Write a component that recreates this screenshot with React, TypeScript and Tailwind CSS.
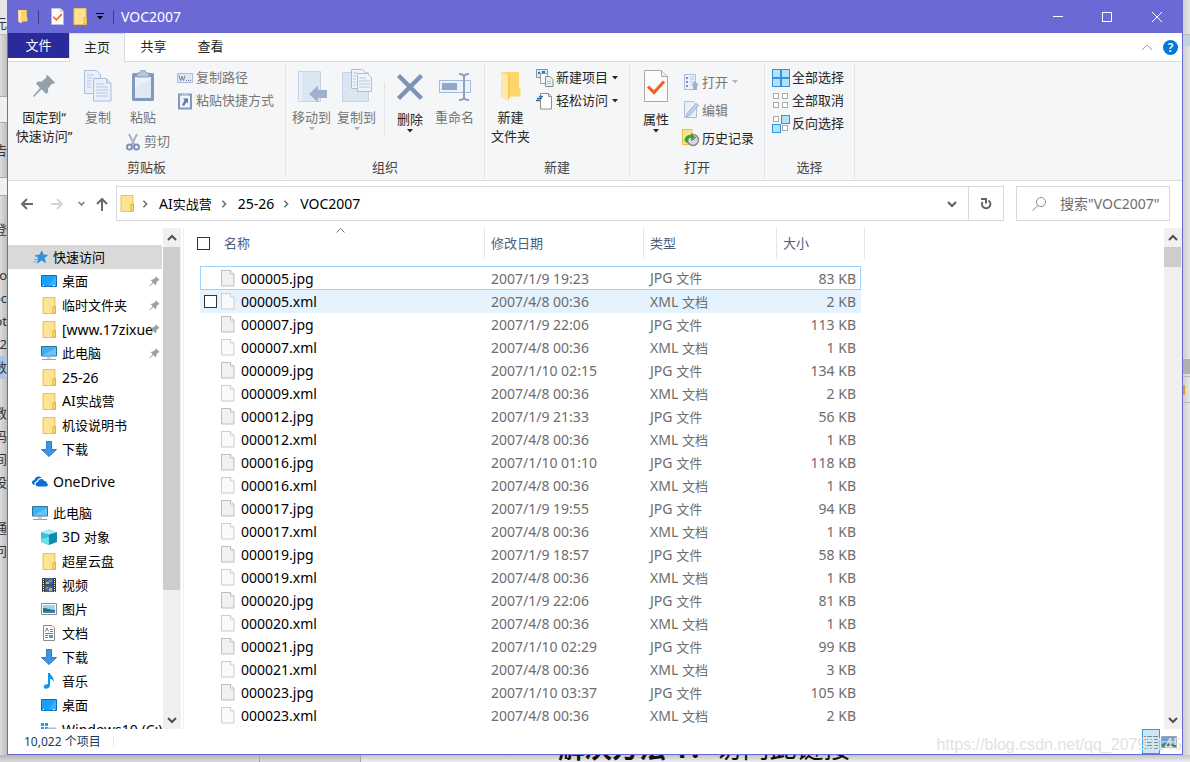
import type { ReactNode } from "react";

const UI_FONT = "font-['Noto_Sans','Noto_Sans_CJK_SC',sans-serif]";

type FileRow = { name: string; date: string; type: string; size: string };

const dates = [
  "2007/1/9 19:23",
  "2007/1/9 22:06",
  "2007/1/10 02:15",
  "2007/1/9 21:33",
  "2007/1/10 01:10",
  "2007/1/9 19:55",
  "2007/1/9 18:57",
  "2007/1/9 22:06",
  "2007/1/10 02:29",
  "2007/1/10 03:37",
];
const ids = ["05", "07", "09", "12", "16", "17", "19", "20", "21", "23"];
const jpgSizes = [83, 113, 134, 56, 118, 94, 58, 81, 99, 105];
const xmlSizes = [2, 1, 2, 1, 1, 1, 1, 1, 3, 2];

const files: FileRow[] = ids.flatMap((id, i) => [
  { name: `0000${id}.jpg`, date: dates[i], type: "JPG 文件", size: `${jpgSizes[i]} KB` },
  { name: `0000${id}.xml`, date: "2007/4/8 00:36", type: "XML 文档", size: `${xmlSizes[i]} KB` },
]);

// Chinese runs are set one pixel smaller than Latin ones
function Txt({ children }: { children: string }) {
  return (
    <span className="text-[14px] whitespace-nowrap">
      {children.split(/([\u4e00-\u9fff]+)/).map((part, i) =>
        i % 2 ? (
          <span key={i} className="text-[13px]">
            {part}
          </span>
        ) : (
          part
        ),
      )}
    </span>
  );
}

/* ---------- icons ---------- */

function FolderIcon({ className = "w-4 h-[17px]" }: { className?: string }) {
  return (
    <svg viewBox="0 0 16 17" className={className} aria-hidden="true">
      <path d="M2 .5h12v8.500h.5v7.500H2z" fill="#ffe394" stroke="#e8c353" />
      <path d="M12 9.500h2.500v6.500H12z" fill="#ffd96f" stroke="#e0b43c" />
    </svg>
  );
}

function OpenFolderIcon({ className }: { className: string }) {
  return (
    <svg viewBox="0 0 22 32" className={className} aria-hidden="true">
      <path d="M1 2h18v15l1.500 1v8.500H1z" fill="#fbd66d" />
      <path d="M1 2l7 3.500V31l-6.500-4z" fill="#ffe9a8" />
      <path d="M8 5.500V31l2-4.500V6z" fill="#f5c956" />
    </svg>
  );
}

function DocCheckIcon({ className }: { className: string }) {
  return (
    <svg viewBox="0 0 24 32" className={className} aria-hidden="true">
      <path d="M.5.5h17l6 6v25H.5z" fill="#fbfbfb" stroke="#a9a9a9" />
      <path d="M17.500.5v6h6" fill="#e9e9e9" stroke="#a9a9a9" />
      <path d="M4 16.500l6 6L20 11.500" fill="none" stroke="#f0601f" strokeWidth="3" />
    </svg>
  );
}

function PinIcon({ className }: { className: string }) {
  return (
    <svg viewBox="0 0 24 24" className={className} aria-hidden="true">
      <path
        d="M15.500 1L23 8.500l-1.500 1.500-1.500-.5-4 5 .2 3.500-2 2-4.700-4.800L2 23l-1-1 7-8L4 9.500l2-2 3.500.3 5-4.300-.5-1.200z"
        fill="#93a0a9"
      />
    </svg>
  );
}

function CopyIcon() {
  return (
    <svg viewBox="0 0 28 32" className="w-7 h-8" aria-hidden="true">
      <g fill="#e9f0f9" stroke="#adc0d9">
        <path d="M.5.5h12l4 4v19H.5z" />
        <path d="M9.500 8.500h13l4.500 4.500v18H9.500z" />
        <path d="M22.500 8.500V13H27" fill="#d3dfee" />
      </g>
      <path d="M3 5h7M3 8h5M3 11h4M3 14h4M3 17h4M12 14h8M12 17h12M12 20h12M12 23h12M12 26h12" stroke="#b4c8e2" />
    </svg>
  );
}

function PasteIcon() {
  return (
    <svg viewBox="0 0 24 32" className="w-6 h-8" aria-hidden="true">
      <rect x="1" y="3" width="22" height="28" rx="1.500" fill="#8299be" />
      <path d="M4 7h16v21H4z" fill="#eaf1fa" />
      <path d="M4 18l16-9v19H4z" fill="#dfe9f5" />
      <path d="M6 3h3a3 3 0 016 0h3v4H6z" fill="#b8c6dc" stroke="#8d9fbe" />
    </svg>
  );
}

function PathIcon() {
  return (
    <svg viewBox="0 0 16 16" className="w-4 h-4" aria-hidden="true">
      <path d="M.5 3.500h15v9H.5z" fill="#dde8f5" stroke="#a9bcd8" />
      <path d="M2 5.500l1.500 5 1.500-4 1.500 4 1.500-5M9 10.500h1M11 10.500h1M13 10.500h1" fill="none" stroke="#6f8099" />
    </svg>
  );
}

function ShortcutIcon() {
  return (
    <svg viewBox="0 0 16 18" className="w-4 h-[18px]" aria-hidden="true">
      <path d="M2 2.500h12v14H2z" fill="#edf3fa" stroke="#8499bb" strokeWidth="2" />
      <path d="M5 1h6v3H5z" fill="#b8c6dc" />
      <path d="M6 6.500h5v5L9.500 10 7 14l-2-1 2.500-4.500z" fill="#607ba8" />
    </svg>
  );
}

function ScissorsIcon() {
  return (
    <svg viewBox="0 0 14 18" className="w-[14px] h-[18px]" aria-hidden="true">
      <path d="M3 1l5.500 11M11 1L5.500 12" stroke="#a4b4cc" strokeWidth="2" />
      <circle cx="3.500" cy="14" r="2.500" fill="none" stroke="#7d92b5" strokeWidth="2" />
      <circle cx="10.500" cy="14" r="2.500" fill="none" stroke="#7d92b5" strokeWidth="2" />
    </svg>
  );
}

function MoveToIcon() {
  return (
    <svg viewBox="0 0 30 32" className="w-[30px] h-8" aria-hidden="true">
      <path d="M1.500 1.500h22v30h-22z" fill="#dbe6f3" stroke="#c4d3e7" />
      <path d="M2 2h3v29H2z" fill="#e9f0f8" />
      <path d="M12 24l9-8.500V20h9v8h-9v4.500z" fill="#9fb1cf" />
    </svg>
  );
}

function CopyToIcon() {
  return (
    <svg viewBox="0 0 32 34" className="w-8 h-[34px]" aria-hidden="true">
      <path d="M1.500 3.500h26v29h-26z" fill="#dbe6f3" stroke="#c4d3e7" />
      <path d="M10.500.5h11l4 4v15h-15z" fill="#eff4fb" stroke="#a9bedc" />
      <path d="M16.500 4.500h10l4 4v14h-14z" fill="#eff4fb" stroke="#a9bedc" />
      <path d="M12 4h4M12 7h3M12 10h3M12 13h3M12 16h3M18 9h7M18 12h11M18 15h11M18 18h11" stroke="#b4c8e2" />
    </svg>
  );
}

function DeleteIcon() {
  return (
    <svg viewBox="0 0 32 32" className="w-8 h-8" aria-hidden="true">
      <path d="M4.500 5.500l23 23M27.500 5.500l-23 23" stroke="#7f93b5" strokeWidth="4.500" />
    </svg>
  );
}

function RenameIcon() {
  return (
    <svg viewBox="0 0 32 32" className="w-8 h-8" aria-hidden="true">
      <path d="M.5 10.500h31v12H.5z" fill="#e9f1fa" stroke="#a5bad9" />
      <path d="M3 13h15v7H3z" fill="#92a7c8" />
      <path d="M20 4c3 0 5 .5 5 3v20c0 2.500-2 3-5 3M30 4c-3 0-5 .5-5 3v20c0 2.500 2 3 5 3" fill="none" stroke="#8ca0c0" strokeWidth="2" />
    </svg>
  );
}

function NewItemIcon() {
  return (
    <svg viewBox="0 0 18 18" className="w-[18px] h-[18px]" aria-hidden="true">
      <path d="M.5.5h11v8H.5z" fill="#d5ecfa" stroke="#7d98a8" />
      <path d="M2 4h2M6 3h3" stroke="#1979ca" strokeWidth="2" />
      <path d="M4.500 4.500h7v10h-7z" fill="#f7f7f7" stroke="#a0a0a0" />
      <path d="M9.500 7.500h4.500l3 3v7H9.500z" fill="#e8f1fa" stroke="#8b8b8b" />
      <path d="M11 12.500h4M11 14.500h4" stroke="#a9bfd6" />
    </svg>
  );
}

function EasyAccessIcon() {
  return (
    <svg viewBox="0 0 18 18" className="w-[18px] h-[18px]" aria-hidden="true">
      <path d="M4.500 1.500h8l3 3v12.500h-11z" fill="#fff" stroke="#909090" />
      <path d="M12.500 1.500v3h3" fill="none" stroke="#909090" />
      <path d="M3 4.500h4M1 6.500h5M0 8.500h4" stroke="#2c6fa8" strokeWidth="1.500" />
    </svg>
  );
}

function OpenIcon() {
  return (
    <svg viewBox="0 0 16 18" className="w-4 h-[18px]" aria-hidden="true">
      <path d="M1.500 1.500h11v15h-11z" fill="#eaf1fa" stroke="#aabddb" />
      <path d="M3 4h2v2H3zM3 8h2v2H3zM3 12h2v2H3z" fill="#7e93b7" />
      <path d="M7 4h4M7 6h4M7 9h4" stroke="#b4c8e2" />
      <path d="M12 8l4 4.500h-2V17h-4v-4.500H8z" fill="#9db0d0" />
    </svg>
  );
}

function EditIcon() {
  return (
    <svg viewBox="0 0 16 18" className="w-4 h-[18px]" aria-hidden="true">
      <path d="M1.500.5h9l3 3v13h-12z" fill="#e9f0f9" stroke="#adc0d9" />
      <path d="M3 16l1.500-4L13 2.500l2.500 2L7 14z" fill="#c3d2e6" stroke="#9db0d0" />
    </svg>
  );
}

function HistoryIcon() {
  return (
    <svg viewBox="0 0 18 18" className="w-[18px] h-[18px]" aria-hidden="true">
      <path d="M.5.5h9.500v15H.5z" fill="#ffe18c" stroke="#e6c04e" />
      <circle cx="11" cy="11" r="5.500" fill="#d7dadb" stroke="#8d8d8d" strokeWidth="1.500" />
      <path d="M11 11l3-3M11 11h-2" stroke="#666" />
      <path d="M2.500 12c0-4.500 3-6.500 6.500-6V4l4 4-4 3.500V9c-2.500-.3-3.500 1.500-3 5.500z" fill="#36a53a" />
    </svg>
  );
}

const squares = [
  [0, 0],
  [9, 0],
  [0, 9],
  [9, 9],
];

function SelectIcon({ filled }: { filled: number[] }) {
  return (
    <svg viewBox="0 0 18 18" className="w-[18px] h-[18px]" aria-hidden="true">
      {squares.map(([x, y], i) =>
        filled.includes(i) ? (
          <rect key={i} x={x + 0.5} y={y + 0.5} width="8" height="8" fill="#b5e0fb" stroke="#2f93dd" />
        ) : (
          <rect key={i} x={x + 1.5} y={y + 1.5} width="5" height="5" fill="#fff" stroke="#ababab" />
        ),
      )}
    </svg>
  );
}

function Caret({ className = "text-[#262626]" }: { className?: string }) {
  return (
    <svg viewBox="0 0 6 4" className={`w-[6px] h-1 ${className}`} aria-hidden="true">
      <path d="M0 0h6L3 3.500z" fill="currentColor" />
    </svg>
  );
}

function Chevron({ dir, className }: { dir: "up" | "down" | "right"; className: string }) {
  const d = { up: "M1 7l4-4 4 4", down: "M1 3l4 4 4-4", right: "M3 1l4 4-4 4" }[dir];
  return (
    <svg viewBox="0 0 10 10" className={className} fill="none" stroke="currentColor" strokeWidth="2" aria-hidden="true">
      <path d={d} />
    </svg>
  );
}

function StarIcon() {
  return (
    <svg viewBox="0 0 16 16" className="w-4 h-4" aria-hidden="true">
      <path d="M9.800 2l1.500 4 4.200.2-3.300 2.700 1.200 4.600-3.900-2.500L5.500 14l1.200-4.600L3.500 6.500l4.400-.4z" fill="#2a94e2" stroke="#1879c5" strokeWidth=".6" />
      <path d="M3 7.500h3M2 10.500h4M1.500 13h3" stroke="#5db4ee" strokeWidth="1.200" />
    </svg>
  );
}

function DesktopIcon() {
  return (
    <svg viewBox="0 0 16 16" className="w-4 h-4" aria-hidden="true">
      <path d="M.5 2.500h15v11H.5z" fill="#18a0fb" stroke="#0b70b8" />
      <path d="M15 3v8L7 13z" fill="#3fb2ff" />
      <path d="M2 12.500h1M12 12.500h2" stroke="#fff" />
    </svg>
  );
}

function PcIcon() {
  return (
    <svg viewBox="0 0 16 16" className="w-4 h-4" aria-hidden="true">
      <path d="M.5 1.500h15v9.500H.5z" fill="#3ab0f5" stroke="#35718f" />
      <path d="M1 10.500L15 3v7.500z" fill="#63c7ff" />
      <path d="M6 11.500h4v2H6z" fill="#b3c2cc" />
      <path d="M1 14.500h14" stroke="#8ea4b5" />
    </svg>
  );
}

function DownloadIcon() {
  return (
    <svg viewBox="0 0 16 16" className="w-4 h-4" aria-hidden="true">
      <path d="M5.500.5h5v8h5L8 15.500.5 8.500h5z" fill="#3b97e4" stroke="#2a7cc6" />
    </svg>
  );
}

function OneDriveIcon() {
  return (
    <svg viewBox="0 0 16 16" className="w-4 h-4" aria-hidden="true">
      <path d="M2 12c-3-1-2.500-4.500.5-5C3 3.500 7.500 2 10 5 7 4.500 5.500 6 5 8c-2 .5-3 2-2.500 4z" fill="#0a6fd0" />
      <path d="M6 13.500c-3 0-3.500-4 0-4.500.5-3.500 5-4 6-1 2.500-.3 3 1.500 2.700 2.200 2 .8 1.300 3.300-.5 3.300z" fill="#0a6fd0" />
    </svg>
  );
}

function CubeIcon() {
  return (
    <svg viewBox="0 0 16 16" className="w-4 h-4" aria-hidden="true">
      <path d="M0 3l8-3 8 3-8 2.500z" fill="#a5ecf4" />
      <path d="M0 3l8 2.500V16l-8-3z" fill="#34c2d6" />
      <path d="M16 3L8 5.500V16l8-3z" fill="#0e8ea8" />
      <path d="M0 10l8-2v8l-8-3z" fill="#6fdde9" />
    </svg>
  );
}

function VideoIcon() {
  return (
    <svg viewBox="0 0 16 16" className="w-4 h-4" aria-hidden="true">
      <path d="M1 1h14v14H1z" fill="#3a3a3a" />
      <path d="M4 1h8v6.500H4z" fill="#3a62b5" />
      <path d="M4 8.500h8V15H4z" fill="#3a62b5" />
      <path d="M5 5h3v2H5zM8 11h3v3H8z" fill="#e4b32b" />
      <path d="M8 3h3v2H8zM5 10h2v2H5z" fill="#5fae4b" />
      <path d="M2.500 2v13M13.500 2v13" stroke="#fff" strokeDasharray="1 1" />
    </svg>
  );
}

function PictureIcon() {
  return (
    <svg viewBox="0 0 16 16" className="w-4 h-4" aria-hidden="true">
      <path d="M.5 2.500h15v11H.5z" fill="#fff" stroke="#8c8c8c" />
      <path d="M2 4h12v8H2z" fill="#9fd0f5" />
      <path d="M2 7c4 0 7 2 12 2v3H2z" fill="#2f6f73" />
      <path d="M2 10.500h12V12H2z" fill="#3b87c8" />
    </svg>
  );
}

function DocumentIcon() {
  return (
    <svg viewBox="0 0 16 16" className="w-4 h-4" aria-hidden="true">
      <path d="M2.500.5h8.500l2.500 2.500v12.500h-11z" fill="#fff" stroke="#8c8c8c" />
      <path d="M4 6.500L6 3l1.500 3.500M9 4.500h3M9 6.500h3M4 8.500h8M4 10.500h3M4 12.500h3" fill="none" stroke="#2f8fd0" />
      <path d="M8 10h4v3H8z" fill="#4f9ccc" />
    </svg>
  );
}

function MusicIcon() {
  return (
    <svg viewBox="0 0 16 16" className="w-4 h-4" aria-hidden="true">
      <path d="M7 0h2c.5 3 4.500 4 3.500 9-.5-2-1.500-3-3.500-3v6c0 2.500-2 3.800-4 3.800S2 14 3.500 12.300C4.500 11 6 11 7 11.300z" fill="#0d94ee" />
    </svg>
  );
}

function DriveIcon() {
  return (
    <svg viewBox="0 0 16 16" className="w-4 h-4" aria-hidden="true">
      <path d="M0 2h3v3H0zM4 2h3v3H4zM0 6h3v3H0zM4 6h3v3H4z" fill="#1ba1e2" />
      <path d="M7 6.500h8l1 5H1z" fill="#b9bec3" />
    </svg>
  );
}

function PageIcon({ dark }: { dark: boolean }) {
  const line = dark ? "#bdbdbd" : "#cdcdcd";
  return (
    <svg viewBox="0 0 14 17" className="w-[14px] h-[17px]" aria-hidden="true">
      <path d="M.5.5h9l3.500 3.500v12H.5z" fill={dark ? "#f1f1f1" : "#fafafa"} stroke={line} />
      <path d="M9.500.5V4H13" fill="#fff" stroke={line} />
    </svg>
  );
}

/* ---------- title bar and tabs ---------- */

function TitleBar() {
  return (
    <header className="flex h-[33px] items-center bg-[#6b69d6] text-white">
      <OpenFolderIcon className="ml-2 h-[15px] w-[14px]" />
      <span className="ml-2 h-[14px] w-px bg-[#3d3c80]" />
      <button aria-label="属性" className="ml-3">
        <DocCheckIcon className="h-[17px] w-[13px]" />
      </button>
      <button aria-label="新建文件夹" className="ml-2">
        <FolderIcon className="h-[17px] w-4" />
      </button>
      <button aria-label="自定义快速访问工具栏" className="ml-2 flex flex-col items-center gap-[2px]">
        <span className="h-px w-2 bg-black" />
        <Caret className="text-black" />
      </button>
      <span className="mr-[7px] ml-[9px] h-[14px] w-px bg-[#3d3c80]" />
      <h1 className="text-[14px] leading-[19px]">VOC2007</h1>
      <div className="ml-auto flex h-full">
        <button aria-label="最小化" className="flex w-[49px] items-center justify-center">
          <span className="h-px w-[10px] bg-white" />
        </button>
        <button aria-label="最大化" className="flex w-[49px] items-center justify-center">
          <span className="h-[10px] w-[10px] border border-white" />
        </button>
        <button aria-label="关闭" className="flex w-[51px] items-center justify-center">
          <svg viewBox="0 0 10 10" className="h-[10px] w-[10px]" stroke="#fff" aria-hidden="true">
            <path d="M0 0l10 10M10 0L0 10" />
          </svg>
        </button>
      </div>
    </header>
  );
}

function Tabs() {
  return (
    <nav className="flex h-[29px] border-b border-[#dadbdc] bg-white text-[13px] text-[#262626]">
      <button className="h-[25px] w-[61px] bg-[#2b2a9b] text-white">文件</button>
      <button className="-mb-px w-14 border-x border-t border-[#dadbdc] bg-[#f5f6f7]">主页</button>
      <button className="w-[57px]">共享</button>
      <button className="w-[57px]">查看</button>
      <div className="ml-auto flex items-center gap-[10px] pr-1">
        <button aria-label="最小化功能区">
          <svg viewBox="0 0 12 7" className="h-[7px] w-3" fill="none" stroke="#a0a0a0" aria-hidden="true">
            <path d="M1 6l5-5 5 5" />
          </svg>
        </button>
        <button
          aria-label="帮助"
          className="h-[15px] w-[15px] rounded-full bg-[#0078d7] text-[12px] leading-[15px] font-semibold text-white"
        >
          ?
        </button>
      </div>
    </nav>
  );
}

/* ---------- ribbon ---------- */

function Group({ label, className, children }: { label: string; className: string; children: ReactNode }) {
  return (
    <section className={`my-[2px] flex flex-col border-r border-[#e2e3e4] ${className}`}>
      <div className="flex flex-1">{children}</div>
      <h2 className="pb-px text-center text-[13px] leading-[19px] text-[#454545]">{label}</h2>
    </section>
  );
}

type BigProps = { icon: ReactNode; lines: string[]; width: string; disabled?: boolean; menu?: boolean; low?: boolean };

function BigButton({ icon, lines, width, disabled, menu, low }: BigProps) {
  return (
    <button
      disabled={disabled}
      className={`flex flex-col items-center self-start pt-[6px] text-[13px] leading-[19px] whitespace-nowrap ${width} ${
        disabled ? "text-[#777]" : "text-[#262626]"
      }`}
    >
      <span className="flex h-8 items-center justify-center">{icon}</span>
      <span className={low ? "mt-2" : "mt-[6px]"}>
        {lines.map((l) => (
          <span key={l} className="block">
            {l}
          </span>
        ))}
      </span>
      {menu && <Caret className={disabled ? "text-[#b5b5b5]" : "text-[#262626]"} />}
    </button>
  );
}

type SmallProps = { icon: ReactNode; label: string; disabled?: boolean; menu?: boolean; tall?: boolean };

function SmallButton({ icon, label, disabled, menu, tall }: SmallProps) {
  return (
    <button
      disabled={disabled}
      className={`flex items-center gap-[2px] text-[13px] leading-[19px] whitespace-nowrap ${tall ? "h-7" : "h-[23px]"} ${
        disabled ? "text-[#777]" : "text-[#262626]"
      }`}
    >
      <span className="flex w-[18px] justify-center">{icon}</span>
      {label}
      {menu && <Caret className={`ml-[2px] ${disabled ? "text-[#b5b5b5]" : "text-[#262626]"}`} />}
    </button>
  );
}

function Ribbon() {
  return (
    <div className="flex h-[118px] bg-[#f5f6f7]">
      <Group label="剪贴板" className="w-[278px]">
        <BigButton icon={<PinIcon className="h-6 w-6" />} lines={["固定到“", "快速访问”"]} width="w-[72px]" />
        <BigButton icon={<CopyIcon />} lines={["复制"]} width="w-9" disabled />
        <div className="flex w-[54px] flex-col gap-[3px]">
          <BigButton icon={<PasteIcon />} lines={["粘贴"]} width="w-[54px]" disabled />
          <div className="pl-2">
            <SmallButton icon={<ScissorsIcon />} label="剪切" disabled />
          </div>
        </div>
        <div className="flex flex-col pt-[2px] pl-[6px]">
          <SmallButton icon={<PathIcon />} label="复制路径" disabled />
          <SmallButton icon={<ShortcutIcon />} label="粘贴快捷方式" disabled />
        </div>
      </Group>
      <Group label="组织" className="w-[199px]">
        <div className="flex pl-[3px]">
          <BigButton icon={<MoveToIcon />} lines={["移动到"]} width="w-[45px]" disabled menu />
          <BigButton icon={<CopyToIcon />} lines={["复制到"]} width="w-[45px]" disabled menu />
          <span className="mt-[18px] mr-[3px] ml-[5px] h-[55px] w-px bg-[#e2e3e4]" />
          <BigButton icon={<DeleteIcon />} lines={["删除"]} width="w-11" menu low />
          <BigButton icon={<RenameIcon />} lines={["重命名"]} width="w-[45px]" disabled />
        </div>
      </Group>
      <Group label="新建" className="w-[145px]">
        <div className="flex pl-[3px]">
          <BigButton icon={<OpenFolderIcon className="h-8 w-[22px]" />} lines={["新建", "文件夹"]} width="w-[45px]" />
          <div className="flex flex-col pt-[2px] pl-[3px]">
            <SmallButton icon={<NewItemIcon />} label="新建项目" menu />
            <SmallButton icon={<EasyAccessIcon />} label="轻松访问" menu />
          </div>
        </div>
      </Group>
      <Group label="打开" className="w-[135px]">
        <div className="flex pl-1">
          <BigButton icon={<DocCheckIcon className="h-8 w-6" />} lines={["属性"]} width="w-11" menu low />
          <div className="flex flex-col pt-1 pl-1">
            <SmallButton icon={<OpenIcon />} label="打开" disabled menu tall />
            <SmallButton icon={<EditIcon />} label="编辑" disabled tall />
            <SmallButton icon={<HistoryIcon />} label="历史记录" tall />
          </div>
        </div>
      </Group>
      <Group label="选择" className="w-[90px]">
        <div className="flex flex-col pt-[2px] pl-[7px]">
          <SmallButton icon={<SelectIcon filled={[0, 1, 2, 3]} />} label="全部选择" />
          <SmallButton icon={<SelectIcon filled={[]} />} label="全部取消" />
          <SmallButton icon={<SelectIcon filled={[1, 2]} />} label="反向选择" />
        </div>
      </Group>
    </div>
  );
}

/* ---------- address bar ---------- */

function ArrowIcon({ d, className }: { d: string; className: string }) {
  return (
    <svg viewBox="0 0 14 14" className={`h-[14px] w-[14px] ${className}`} fill="none" stroke="currentColor" strokeWidth="2" aria-hidden="true">
      <path d={d} />
    </svg>
  );
}

function Crumb({ label }: { label: string }) {
  return (
    <li className="flex items-center">
      <Chevron dir="right" className="mr-[10px] h-2 w-2 text-[#707070]" />
      <a href="#" className="mr-2 leading-[19px]">
        <Txt>{label}</Txt>
      </a>
    </li>
  );
}

function AddressBar() {
  return (
    <div className="flex h-12 items-start border-t border-[#dadbdc] bg-white pt-[5px]">
      <div className="flex h-[35px] w-[108px] items-center pl-3">
        <button aria-label="后退">
          <ArrowIcon d="M13 7H2M7 2L2 7l5 5" className="text-[#6a6a6a]" />
        </button>
        <button aria-label="前进" className="ml-4">
          <ArrowIcon d="M1 7h11M7 2l5 5-5 5" className="text-[#d4d4d4]" />
        </button>
        <button aria-label="最近的位置" className="ml-[14px]">
          <Chevron dir="down" className="h-[7px] w-[7px] text-[#707070]" />
        </button>
        <button aria-label="上移" className="ml-[10px]">
          <ArrowIcon d="M7 14V2M2 7l5-5 5 5" className="text-[#6a6a6a]" />
        </button>
      </div>
      <div className="flex h-[35px] flex-1 border border-[#d9d9d9]">
        <ol className="flex flex-1 items-center pl-[2px]">
          <li className="mr-[6px]">
            <FolderIcon className="h-[17px] w-4" />
          </li>
          <Crumb label="AI实战营" />
          <Crumb label="25-26" />
          <Crumb label="VOC2007" />
        </ol>
        <button aria-label="上一个位置" className="flex w-8 items-center justify-center">
          <Chevron dir="down" className="h-[10px] w-[10px] text-[#606060]" />
        </button>
        <button aria-label="刷新" className="flex w-[35px] items-center justify-center border-l border-[#d9d9d9]">
          <svg viewBox="0 0 12 13" className="h-[13px] w-3" fill="none" stroke="#606060" strokeWidth="2" aria-hidden="true">
            <path d="M8.500 3.500A4.200 4.200 0 112.500 5" />
            <path d="M1 2h5v4.500" />
          </svg>
        </button>
      </div>
      <label className="mr-3 ml-3 flex h-[35px] w-[154px] items-center border border-[#d9d9d9] pl-[15px]">
        <svg viewBox="0 0 14 14" className="h-[14px] w-[14px] shrink-0" fill="none" stroke="#8a8a8a" aria-hidden="true">
          <circle cx="9" cy="5" r="4.500" />
          <path d="M6 8.500L.5 13.500" />
        </svg>
        <input
          aria-label="搜索"
          placeholder={'搜索"VOC2007"'}
          className="ml-[14px] w-[106px] text-[14px] outline-none placeholder:text-[#6d6d6d]"
        />
      </label>
    </div>
  );
}

/* ---------- navigation pane ---------- */

type NavEntry = { icon: ReactNode; label: string; root?: boolean; pinned?: boolean; active?: boolean };

const navGroups: NavEntry[][] = [
  [
    { icon: <StarIcon />, label: "快速访问", root: true, active: true },
    { icon: <DesktopIcon />, label: "桌面", pinned: true },
    { icon: <FolderIcon />, label: "临时文件夹", pinned: true },
    { icon: <FolderIcon />, label: "[www.17zixue", pinned: true },
    { icon: <PcIcon />, label: "此电脑", pinned: true },
    { icon: <FolderIcon />, label: "25-26" },
    { icon: <FolderIcon />, label: "AI实战营" },
    { icon: <FolderIcon />, label: "机设说明书" },
    { icon: <DownloadIcon />, label: "下载" },
  ],
  [{ icon: <OneDriveIcon />, label: "OneDrive", root: true }],
  [
    { icon: <PcIcon />, label: "此电脑", root: true },
    { icon: <CubeIcon />, label: "3D 对象" },
    { icon: <FolderIcon />, label: "超星云盘" },
    { icon: <VideoIcon />, label: "视频" },
    { icon: <PictureIcon />, label: "图片" },
    { icon: <DocumentIcon />, label: "文档" },
    { icon: <DownloadIcon />, label: "下载" },
    { icon: <MusicIcon />, label: "音乐" },
    { icon: <DesktopIcon />, label: "桌面" },
    { icon: <DriveIcon />, label: "Windows10 (C:)" },
  ],
];

function NavItem({ icon, label, root, pinned, active }: NavEntry) {
  return (
    <li>
      <a
        href="#"
        className={`flex h-6 items-center pr-[2px] leading-[19px] text-black ${root ? "pl-6" : "pl-[33px]"} ${
          active ? "bg-[#d9d9d9]" : ""
        }`}
      >
        <span className="mr-[5px] w-4 shrink-0">{icon}</span>
        <span className="min-w-0 flex-1">
          <Txt>{label}</Txt>
        </span>
        {pinned && <PinIcon className="h-[11px] w-[11px] shrink-0" />}
      </a>
    </li>
  );
}

function Scrollbar({ thumb }: { thumb: string }) {
  return (
    <div className="flex w-[18px] shrink-0 flex-col bg-[#f0f0f0] text-[#505050]">
      <button aria-label="向上滚动" className="flex h-[19px] items-center justify-center">
        <Chevron dir="up" className="h-[10px] w-[10px]" />
      </button>
      <div className="flex-1">
        <div className={`mr-px bg-[#cdcdcd] ${thumb}`} />
      </div>
      <button aria-label="向下滚动" className="flex h-[19px] items-center justify-center">
        <Chevron dir="down" className="h-[10px] w-[10px]" />
      </button>
    </div>
  );
}

function NavPane() {
  return (
    <aside className="flex w-[176px] shrink-0 border-r border-[#f0f0f0] pr-[2px]">
      <div className="mr-px flex-1 overflow-hidden pt-[17px]">
        {navGroups.map((group, i) => (
          <ul key={i} className="mb-2">
            {group.map((entry, j) => (
              <NavItem key={j} {...entry} />
            ))}
          </ul>
        ))}
      </div>
      <Scrollbar thumb="h-[74%]" />
    </aside>
  );
}

/* ---------- file list ---------- */

function Th({ label, last }: { label: string; last?: boolean }) {
  return (
    <th className="p-0 align-top font-normal">
      <div className={`flex h-[31px] items-center pl-[6px] text-[13px] ${last ? "" : "border-r border-[#e5e5e5]"}`}>{label}</div>
    </th>
  );
}

function FileTable() {
  return (
    <table className="w-[665px] table-fixed border-separate border-spacing-0 text-left leading-[19px]">
      <colgroup>
        <col className="w-[285px]" />
        <col className="w-[159px]" />
        <col className="w-[133px]" />
        <col className="w-[84px]" />
        <col className="w-1" />
      </colgroup>
      <thead className="text-[#4c607a]">
        <tr className="h-[38px]">
          <th className="relative p-0 align-top font-normal">
            <div className="flex h-[31px] items-center gap-[14px] border-r border-[#e5e5e5] text-[13px]">
              <input type="checkbox" aria-label="全选" className="-ml-[3px] h-[13px] w-[13px] appearance-none border border-[#333] bg-white" />
              名称
            </div>
            <svg viewBox="0 0 9 5" className="absolute top-0 left-[136px] h-[5px] w-[9px]" fill="none" stroke="#707070" aria-hidden="true">
              <path d="M.5 4.500l4-4 4 4" />
            </svg>
          </th>
          <Th label="修改日期" />
          <Th label="类型" />
          <Th label="大小" last />
          <th className="p-0 align-top" aria-hidden="true">
            <div className="h-[31px] border-r border-[#e5e5e5]" />
          </th>
        </tr>
      </thead>
      <tbody className="text-[#6d6d6d]">
        {files.map((f, i) => {
          const focused = i === 0;
          const hover = i === 1;
          const cell = `p-0 ${focused ? "h-6 border-y border-[#99d1ff]" : "h-[23px]"} ${hover ? "bg-[#e5f3ff]" : ""}`;
          return (
            <tr key={f.name}>
              <td className={`${cell} border-l ${focused ? "" : "border-transparent"}`}>
                <div className="flex items-center pl-[3px]">
                  <input
                    type="checkbox"
                    aria-label={f.name}
                    className={`mr-1 h-[13px] w-[13px] appearance-none border border-[#333] bg-white ${hover ? "" : "opacity-0"}`}
                  />
                  <PageIcon dark={i % 2 === 0} />
                  <span className="ml-[6px] text-[14px] text-black">{f.name}</span>
                </div>
              </td>
              <td className={`${cell} text-[14px]`}>
                <span className="pl-[6px]">{f.date}</span>
              </td>
              <td className={cell}>
                <span className="pl-[6px]">
                  <Txt>{f.type}</Txt>
                </span>
              </td>
              <td className={`${cell} border-r text-right text-[14px] ${focused ? "" : "border-transparent"}`}>
                <span className="pr-1">{f.size}</span>
              </td>
              <td className="p-0" />
            </tr>
          );
        })}
      </tbody>
    </table>
  );
}

/* ---------- status bar ---------- */

function StatusBar() {
  return (
    <footer className="relative flex h-[25px] items-center bg-white pl-4 leading-[19px] text-[#1e395b]">
      <span className="text-[12px]">10,022 个项目</span>
      <span className="ml-3 h-[11px] w-px bg-[#e8e8e8]" />
      <div className="ml-auto flex h-full items-center pr-[5px]">
        <button aria-label="详细信息" className="flex h-full w-[18px] items-center justify-center border border-[#26a0da] bg-[#cbe8f6]">
          <svg viewBox="0 0 14 14" className="h-[14px] w-[14px]" aria-hidden="true">
            <path d="M0 1.500h2M0 4.500h2M0 7.500h2M0 10.500h2M0 13.500h2" stroke="#c07a6a" />
            <path d="M3 1.500h5M9 1.500h5M3 4.500h5M9 4.500h5M3 7.500h5M9 7.500h5M3 10.500h5M9 10.500h5M3 13.500h5M9 13.500h5" stroke="#6f8b9b" />
          </svg>
        </button>
        <button aria-label="大图标" className="ml-px">
          <svg viewBox="0 0 16 12" className="h-3 w-4" aria-hidden="true">
            <path d="M.5.5h15v11H.5z" fill="#a9cdf3" stroke="#9aa5b0" />
            <path d="M1 1h14v4H1z" fill="#6d9fe4" />
            <path d="M1 8l4-2 4 2 6-1v4H1z" fill="#4a7d74" />
          </svg>
        </button>
      </div>
      <span className="pointer-events-none absolute top-[6px] right-0 font-['Liberation_Sans',sans-serif] text-[16px] text-[#e2e2e2]">
        https://blog.csdn.net/qq_20793145
      </span>
    </footer>
  );
}

/* ---------- page peeking out behind the window ---------- */

const leftLines = ["登", "：", "Mo", "oc", "ot", "习2", "数", "", "教", "码", "间", "设", "", "通", "问"];

function LeftEdge() {
  return (
    <div className="overflow-hidden bg-linear-to-r from-[#dcdcdc] to-[#bdbdbd] text-[13px] leading-[23px] text-[#333]">
      <div className="flex h-[35px] items-center justify-end border-b border-[#bbb] bg-[#e6e6e6] pt-3">元</div>
      <div className="h-[62px] border-b border-[#aaa]" />
      <div className="h-[26px] border-b border-[#aaa] bg-[#f0f0f0]" />
      <div className="flex h-[55px] items-center justify-end border-b border-[#aaa]">告</div>
      <div className="h-[18px] border-b border-[#aaa] bg-[#f0f0f0]" />
      <div className="pt-[22px]">
        {leftLines.map((line, i) => (
          <div key={i} className={`flex h-[23px] justify-end whitespace-nowrap ${line === "数" ? "bg-[#afc3e3]" : ""}`}>
            {line}
          </div>
        ))}
      </div>
    </div>
  );
}

function RightEdge() {
  return (
    <div className="overflow-hidden bg-linear-to-r from-[#cfcfcf] to-[#e6e6e6]">
      <div className="h-[35px] border-b border-[#bbb]" />
      <div className="h-[11px] bg-[#c2d3e0]" />
      <div className="mt-[313px] h-[15px] bg-[#b0b0b0]" />
      <div className="mt-[2px] flex h-[27px] items-center border-y border-[#b5b5b5]">
        <span className="h-[10px] w-[2px] bg-[#d8a12c]" />
      </div>
    </div>
  );
}

function BottomEdge() {
  return (
    <div className="col-span-3 flex h-[7px] overflow-hidden bg-linear-to-b from-[#b4b4b4] to-[#dcdcdc]">
      <div className="w-[260px] border-r border-[#a5a5a5]" />
      <div className="w-[101px] border-r border-[#a5a5a5]" />
      <div className="flex flex-1 items-end bg-linear-to-b from-[#c4c4c4] to-[#f0f0f0] pl-[197px] text-[27px] leading-[28px] whitespace-pre text-[#111]">
        <b>解决方法 1：</b>访问此链接·
      </div>
    </div>
  );
}

export default function App() {
  return (
    <div
      lang="zh-CN"
      className={`grid h-screen grid-cols-[7px_minmax(0,1fr)_7px] grid-rows-[minmax(0,1fr)_auto] overflow-hidden bg-[#d0d0d0] ${UI_FONT}`}
    >
      <LeftEdge />
      <main className="flex flex-col overflow-hidden border-x border-b border-[#6b69d6] bg-white">
        <TitleBar />
        <Tabs />
        <Ribbon />
        <AddressBar />
        <div className="flex min-h-0 flex-1">
          <NavPane />
          <div className="flex-1 overflow-hidden pl-4">
            <FileTable />
          </div>
          <Scrollbar thumb="h-5" />
        </div>
        <StatusBar />
      </main>
      <RightEdge />
      <BottomEdge />
    </div>
  );
}
